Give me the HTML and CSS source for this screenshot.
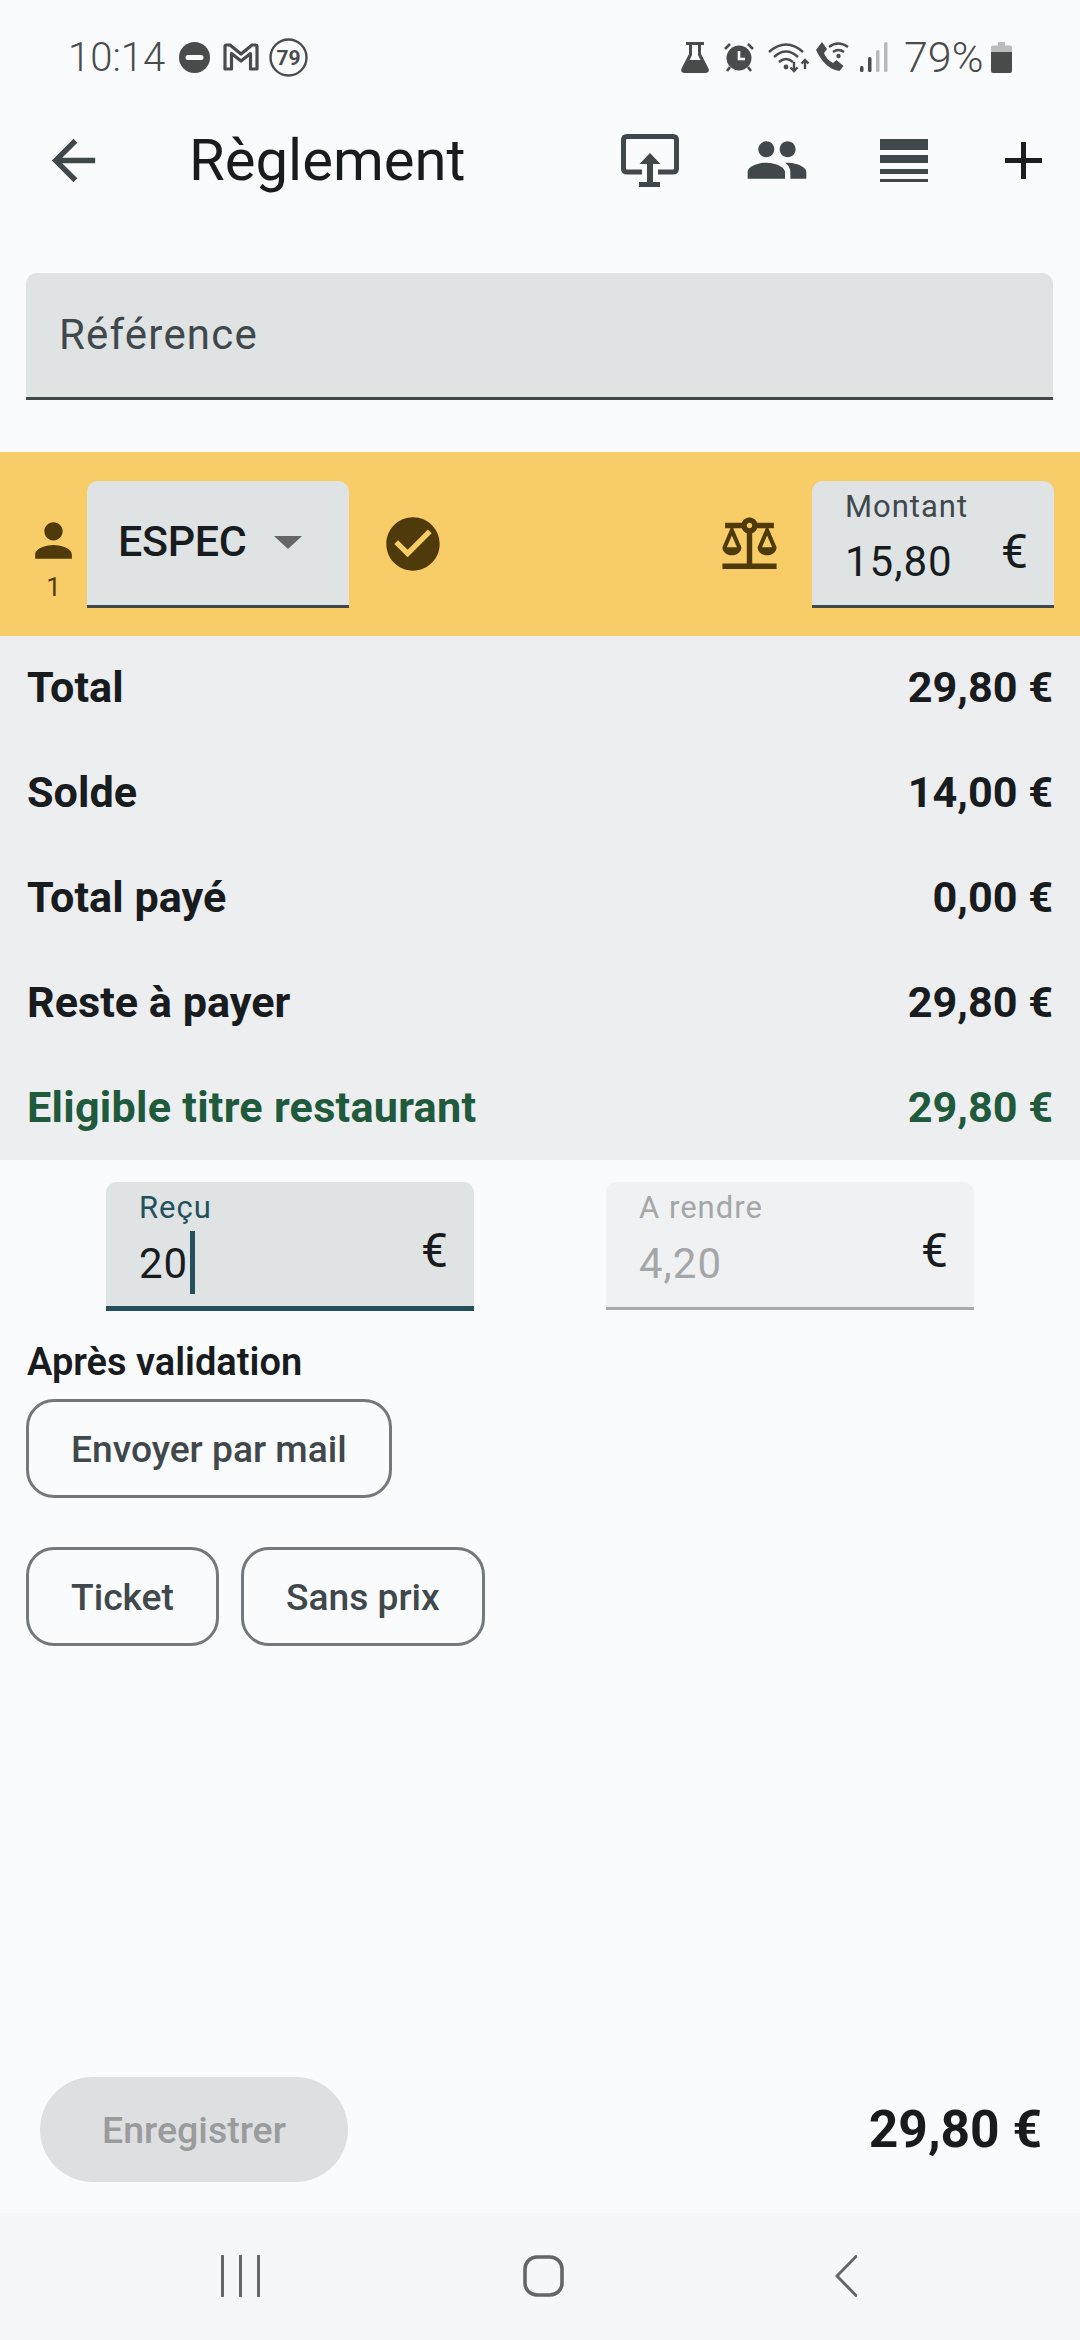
FILE: index.html
```html
<!DOCTYPE html>
<html lang="fr">
<head>
<meta charset="utf-8">
<title>Règlement</title>
<link rel="stylesheet" href="styles.css">
</head>
<body>
<div class="screen">
  <div class="status">
    <span class="clock">10:14</span>
    <svg class="s-dnd" viewBox="0 0 31 31"><circle cx="15.5" cy="15.5" r="15.5" fill="#4a4c4c"/><rect x="6.5" y="13" width="18" height="5" rx="2.5" fill="#fafbfd"/></svg>
    <svg class="s-gm" viewBox="0 0 36 28"><path d="M2 26V3.500q0-1.500 1.500-1.500H7L18 11 29 2h3.500q1.500 0 1.500 1.500V26h-6.500V10.500L18 18 8.500 10.500V26z" fill="none" stroke="#4a4c4c" stroke-width="3.200" stroke-linejoin="round"/></svg>
    <svg class="s-79" viewBox="0 0 39 39"><circle cx="19.500" cy="19.500" r="18" fill="none" stroke="#4a4c4c" stroke-width="2.400"/><text x="19.500" y="27" text-anchor="middle" class="s-79-text">79</text></svg>
    <span class="status-gap"></span>
    <svg class="s-flask" viewBox="0 0 28 31"><path d="M5 0h18v3h-3v9l7.500 14.500Q29 31 24 31H4q-5 0-3.500-4.500L8 12V3H5zM11 3v10l-2.500 5h11L17 13V3z" fill="#4a4c4c" fill-rule="evenodd"/></svg>
    <svg class="s-alarm" viewBox="0 0 30 30"><circle cx="15" cy="16" r="12.500" fill="#4a4c4c"/><path d="M1 7l5-5M29 7l-5-5M6 25l-3 4M24 25l3 4" stroke="#4a4c4c" stroke-width="2.600" fill="none"/><path d="M15 9v8h6" stroke="#fafbfd" stroke-width="2.600" fill="none"/></svg>
    <svg class="s-wifi" viewBox="0 0 42 32"><g fill="none" stroke="#4a4c4c" stroke-width="2.400"><path d="M1 11Q18-4 35 11"/><path d="M6 16Q18 5 30 16"/><path d="M11 21Q18 15 25 21"/><path d="M26 21v9M22.500 26.500 26 30l3.500-3.500M37 28v-9M33.500 22.500 37 19l3.500 3.500"/></g><circle cx="18" cy="26" r="2.400" fill="#4a4c4c"/></svg>
    <svg class="s-call" viewBox="0 0 34 30"><path d="M7 0l5 7-3 4q2 6 9 10l3.500-3 7 6-4 5Q10 27 1 8z" fill="#4a4c4c"/><g fill="none" stroke="#4a4c4c" stroke-width="2.300"><path d="M14 5Q23-2 33 5"/><path d="M18 10Q23.500 6 29 10"/></g><circle cx="23.500" cy="14" r="2.200" fill="#4a4c4c"/></svg>
    <svg class="s-signal" viewBox="0 0 28 30"><rect x="0" y="24" width="3.500" height="6" rx="1.500" fill="#4a4c4c"/><rect x="8" y="15" width="3.500" height="15" rx="1.500" fill="#4a4c4c"/><rect x="16" y="8" width="3.500" height="22" rx="1.500" fill="#b9b9b9"/><rect x="24" y="0" width="3.500" height="30" rx="1.500" fill="#b9b9b9"/></svg>
    <span class="battery-text">79%</span>
    <svg class="s-batt" viewBox="0 0 21 31"><path d="M7 0h7v3.500h5q2 0 2 2V10H0V5.500q0-2 2-2h5z" fill="#bcbcbc"/><path d="M0 10h21v19q0 2-2 2H2q-2 0-2-2z" fill="#4a4c4c"/></svg>
  </div>

  <header class="appbar">
    <svg class="i-back" viewBox="0 0 24 24"><path d="M20 11H7.830l5.590-5.590L12 4l-8 8 8 8 1.410-1.410L7.830 13H20v-2z"/></svg>
    <h1 class="title">Règlement</h1>
    <svg class="i-cast" viewBox="0 0 58 53"><path d="M21 38H6q-3.500 0-3.500-3.500V6q0-3.500 3.500-3.500h46q3.500 0 3.500 3.500v28.500q0 3.500-3.500 3.500H37" fill="none" stroke="#40484c" stroke-width="5"/><path d="M29 19l10.500 11H32v18h7v5H18v-5h8V30h-7.500z" fill="#40484c"/></svg>
    <svg class="i-people" viewBox="0 0 24 24"><path d="M16 11c1.660 0 2.990-1.340 2.990-3S17.660 5 16 5c-1.660 0-3 1.340-3 3s1.340 3 3 3zm-8 0c1.660 0 2.990-1.340 2.990-3S9.660 5 8 5C6.340 5 5 6.340 5 8s1.340 3 3 3zm0 2c-2.330 0-7 1.170-7 3.500V19h14v-2.500c0-2.330-4.670-3.500-7-3.500zm8 0c-.290 0-.620.020-.970.050 1.160.840 1.970 1.970 1.970 3.450V19h6v-2.500c0-2.330-4.670-3.500-7-3.500z"/></svg>
    <svg class="i-rows" viewBox="0 0 48 43"><rect width="48" height="11"/><rect y="16" width="48" height="8"/><rect y="30" width="48" height="5"/><rect y="40" width="48" height="3"/></svg>
    <svg class="i-plus" viewBox="0 0 37 37"><path d="M16 0h5v16h16v5H21v16h-5V21H0v-5h16z"/></svg>
  </header>

  <div class="ref-field"><span class="ref-label">Référence</span></div>

  <section class="band">
    <div class="person">
      <svg class="i-person" viewBox="0 0 24 24"><path d="M12 12c2.210 0 4-1.790 4-4s-1.790-4-4-4-4 1.790-4 4 1.790 4 4 4zm0 2c-2.670 0-8 1.340-8 4v2h16v-2c0-2.660-5.330-4-8-4z"/></svg>
      <span class="person-num">1</span>
    </div>
    <div class="select">
      <span class="select-text">ESPEC</span>
      <span class="caret"></span>
    </div>
    <svg class="i-check" viewBox="0 0 24 24"><path d="M12 2C6.480 2 2 6.480 2 12s4.480 10 10 10 10-4.480 10-10S17.520 2 12 2zm-2 15l-5-5 1.410-1.410L10 14.170l7.590-7.590L19 8l-9 9z"/></svg>
    <span class="spacer"></span>
    <svg class="i-balance" viewBox="0 0 24 24"><path d="M13 7.830c.850-.300 1.530-.980 1.830-1.830H18l-3 7c0 1.660 1.570 3 3.500 3s3.500-1.340 3.500-3l-3-7h2V4h-6.170c-.410-1.170-1.520-2-2.830-2s-2.420.830-2.830 2H3v2h2l-3 7c0 1.660 1.570 3 3.500 3S9 14.660 9 13L6 6h3.170c.300.850.980 1.530 1.830 1.830V19H2v2h20v-2h-9V7.830zM20.370 13h-3.740l1.870-4.360L20.370 13zm-13 0H3.630L5.500 8.640 7.370 13zM12 6c-.550 0-1-.450-1-1s.450-1 1-1 1 .450 1 1-.450 1-1 1z"/></svg>
    <div class="amount">
      <div class="amount-col">
        <span class="amount-label">Montant</span>
        <span class="amount-value">15,80</span>
      </div>
      <span class="euro">€</span>
    </div>
  </section>

  <section class="summary">
    <div class="row"><span>Total</span><span>29,80 €</span></div>
    <div class="row"><span>Solde</span><span>14,00 €</span></div>
    <div class="row"><span>Total payé</span><span>0,00 €</span></div>
    <div class="row"><span>Reste à payer</span><span>29,80 €</span></div>
    <div class="row row-green"><span>Eligible titre restaurant</span><span>29,80 €</span></div>
  </section>

  <section class="pay">
    <div class="pay-field focused">
      <div class="pay-col">
        <span class="pay-label">Reçu</span>
        <span class="pay-value">20<span class="cursor"></span></span>
      </div>
      <span class="euro">€</span>
    </div>
    <div class="pay-field disabled">
      <div class="pay-col">
        <span class="pay-label">A rendre</span>
        <span class="pay-value">4,20</span>
      </div>
      <span class="euro">€</span>
    </div>
  </section>

  <section class="after">
    <h2 class="after-title">Après validation</h2>
    <div class="chips"><button class="chip">Envoyer par mail</button></div>
    <div class="chips chips-2"><button class="chip">Ticket</button><button class="chip">Sans prix</button></div>
  </section>

  <footer class="foot">
    <button class="save">Enregistrer</button>
    <span class="foot-total">29,80 €</span>
  </footer>

  <nav class="navbar">
    <svg class="n-recent" viewBox="0 0 39 42"><path d="M1.500 1v40M19.500 1v40M37.500 1v40" stroke="#646668" stroke-width="3" stroke-linecap="round" fill="none"/></svg>
    <svg class="n-home" viewBox="0 0 41 42"><rect x="2" y="2" width="37" height="38" rx="12" fill="none" stroke="#646668" stroke-width="3.600"/></svg>
    <svg class="n-back" viewBox="0 0 22 42"><path d="M21 1.500 2 21l19 19.500" stroke="#646668" stroke-width="3" stroke-linecap="round" fill="none"/></svg>
  </nav>
</div>
</body>
</html>
```

FILE: styles.css
```css
* { box-sizing: border-box; }
html, body { margin: 0; padding: 0; }
body { background: #fafbfd; font-family: Roboto, "Noto Sans", sans-serif; color: #191c1e; }
.screen { width: 1080px; height: 2340px; display: flex; flex-direction: column; overflow: hidden; }

.status { height: 114px; padding: 0 68px 0 68px; display: flex; align-items: center; flex: none; color: #4a4c4c; }
.clock { font-size: 40px; font-weight: 300; width: 111px; }
.s-dnd { width: 31px; height: 31px; }
.s-gm { width: 36px; height: 28px; margin-left: 13px; }
.s-79 { width: 39px; height: 39px; margin-left: 10px; }
.s-79-text { font-size: 21px; font-weight: 700; fill: #4a4c4c; font-family: Roboto, sans-serif; }
.status-gap { flex: 1; }
.s-flask { width: 28px; height: 31px; }
.s-alarm { width: 30px; height: 30px; margin-left: 15px; }
.s-wifi { width: 42px; height: 32px; margin-left: 14px; }
.s-call { width: 34px; height: 30px; margin-left: 5px; }
.s-signal { width: 28px; height: 30px; margin-left: 11px; }
.battery-text { font-size: 43px; font-weight: 300; margin-left: 16px; width: 87px; }
.s-batt { width: 21px; height: 31px; }

.appbar { height: 92px; flex: none; display: flex; align-items: center; }
.appbar svg { fill: #40484c; flex: none; }
.i-back { width: 65px; height: 65px; margin-left: 41px; }
.title { font-size: 58px; font-weight: 400; margin: 0 0 0 83px; width: 432px; line-height: 1; }
.i-cast { width: 58px; height: 53px; }
.i-people { width: 64px; height: 64px; margin-left: 66px; }
.i-rows { width: 48px; height: 43px; margin-left: 71px; }
.appbar .i-plus { width: 37px; height: 37px; margin-left: 77px; fill: #1b1f21; }

.ref-field { margin: 67px 27px 0 26px; height: 127px; flex: none; background: #dfe3e4; border-radius: 11px 11px 0 0; border-bottom: 3px solid #40484c; display: flex; align-items: center; padding-left: 33px; }
.ref-label { font-size: 42px; color: #40484c; letter-spacing: 1.200px; line-height: 48px; margin-top: -1px; }

.band { margin-top: 52px; height: 184px; flex: none; background: #f8cc66; display: flex; align-items: center; color: #4f3a0b; }
.band svg { fill: #4f3a0b; flex: none; }
.person { width: 87px; height: 127px; display: flex; flex-direction: column; align-items: center; padding-left: 20px; flex: none; }
.i-person { width: 55px; height: 55px; margin-top: 32px; }
.person-num { font-size: 26px; line-height: 30px; margin-top: 4px; }
.select { width: 262px; height: 127px; flex: none; background: #dfe3e4; border-radius: 11px 11px 0 0; border-bottom: 3px solid #40484c; display: flex; align-items: center; padding: 0 0 3px 31px; color: #191c1e; }
.select-text { font-size: 43px; font-weight: 500; letter-spacing: -0.300px; }
.caret { margin-left: 27px; border-left: 14px solid transparent; border-right: 14px solid transparent; border-top: 13px solid #666; margin-top: 2px; }
.i-check { width: 64px; height: 64px; margin-left: 32px; }
.spacer { flex: 1; }
.i-balance { width: 65px; height: 65px; margin-right: 30px; }
.amount { width: 242px; height: 127px; margin-right: 26px; flex: none; background: #dfe3e4; border-radius: 11px 11px 0 0; border-bottom: 3px solid #40484c; display: flex; justify-content: space-between; padding: 0 26px 0 33px; color: #191c1e; }
.amount-col { display: flex; flex-direction: column; }
.amount-label { font-size: 31px; color: #40484c; letter-spacing: 1px; line-height: 36px; margin-top: 8px; }
.amount-value { font-size: 42px; letter-spacing: 1px; line-height: 50px; margin-top: 12px; }
.euro { font-size: 48px; line-height: 50px; margin-top: 46px; color: #191c1e; }

.summary { flex: none; background: #eceef0; height: 524px; display: flex; flex-direction: column; }
.row { height: 105px; flex: none; display: flex; justify-content: space-between; align-items: center; padding: 0 27px 2px; font-size: 43.200px; font-weight: 700; }
.row-green { color: #1f5a3c; }
.row-green span:first-child { letter-spacing: 0.250px; }

.pay { flex: none; display: grid; grid-template-columns: 368px 368px; column-gap: 132px; padding: 22px 0 0 106px; }
.pay-field { height: 129px; border-radius: 11px 11px 0 0; display: flex; justify-content: space-between; padding: 0 26px 0 33px; }
.focused { background: #dfe3e4; border-bottom: 5px solid #24505e; }
.disabled { background: #f0f1f3; border-bottom: 3px solid #a9abad; height: 128px; }
.pay-col { display: flex; flex-direction: column; }
.pay-label { font-size: 31px; line-height: 36px; margin-top: 8px; letter-spacing: 1px; color: #24505e; }
.pay-value { font-size: 42px; line-height: 50px; margin-top: 13px; letter-spacing: 1px; display: flex; align-items: center; }
.disabled .pay-label, .disabled .pay-value { color: #a4a6a8; }
.cursor { width: 5px; height: 63px; margin: -8px 0 -5px 2px; background: #24505e; }
.pay .euro { margin-top: 44px; }

.after { flex: none; padding: 0 0 0 26px; }
.after-title { font-size: 38px; font-weight: 600; margin: 28px 0 0 1px; line-height: 46px; }
.chips { display: flex; gap: 22px; margin-top: 14px; }
.chips-2 { margin-top: 49px; }
.chip { height: 99px; padding: 0 42px; background: transparent; border: 3px solid #72787b; border-radius: 28px; font-family: Roboto, sans-serif; font-size: 37.200px; font-weight: 500; color: #40484c; }

.foot { margin-top: auto; height: 136px; flex: none; display: flex; justify-content: space-between; align-items: flex-start; padding: 0 38px 0 40px; }
.save { width: 308px; height: 105px; border: 0; border-radius: 53px; background: #dedfe1; color: #9a9b9d; font-family: Roboto, sans-serif; font-size: 37.500px; font-weight: 500; }
.foot-total { font-size: 51.500px; font-weight: 700; line-height: 58px; margin-top: 24px; }

.navbar { height: 127px; flex: none; background: #f6f7f9; display: flex; align-items: flex-start; padding-top: 42px; }
.n-recent { width: 39px; height: 42px; margin-left: 221px; }
.n-home { width: 41px; height: 42px; margin-left: 263px; }
.n-back { width: 22px; height: 42px; margin-left: 271px; }
```
